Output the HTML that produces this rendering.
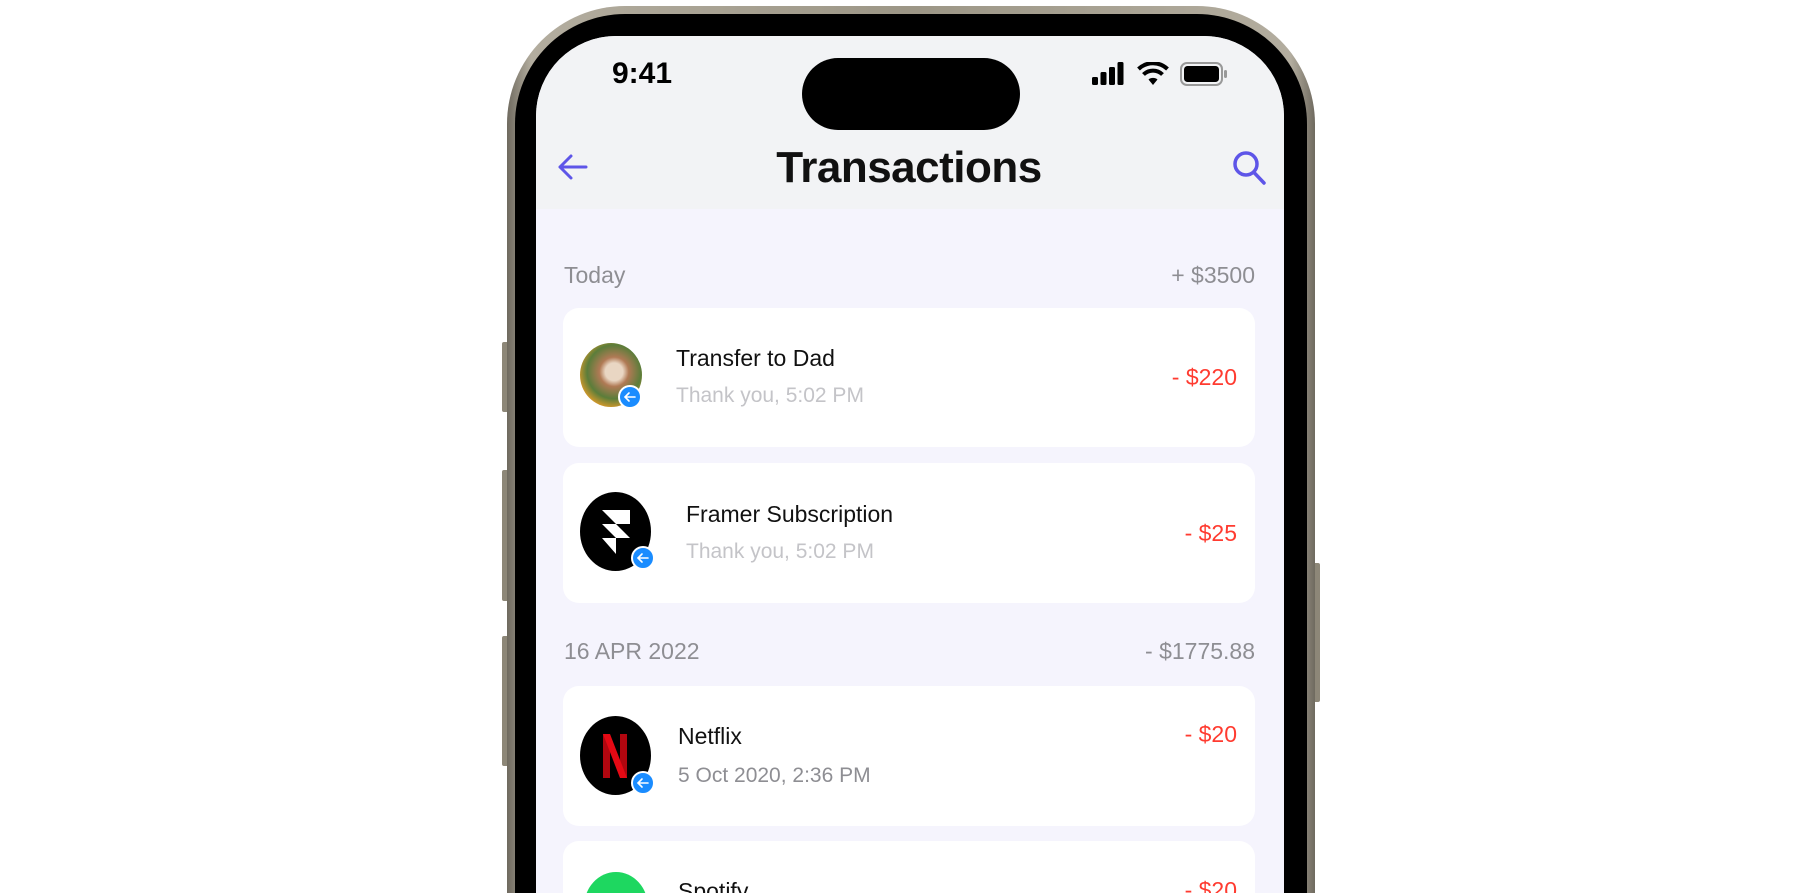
<!DOCTYPE html>
<html style="width:1820px;height:893px;overflow:hidden"><head><meta charset="utf-8"><style>
*{margin:0;padding:0;box-sizing:border-box}
html{overflow:hidden;height:893px}
body{width:1820px;height:893px;background:#fff;position:relative;overflow:hidden;font-family:"Liberation Sans",sans-serif}
.a{position:absolute}
.t{position:absolute;white-space:nowrap;line-height:1}
.card{position:absolute;left:563px;width:692px;background:#fff;border-radius:16px}
.badge{position:absolute;width:24px;height:24px;border-radius:50%;background:#1a8cff;border:2px solid #fff}
.badge svg{position:absolute;left:3px;top:3px}
.title{font-size:23px;color:#111}
.sub{font-size:21px;color:#c4c4c8}
.amt{font-size:23px;color:#ff3b30;right:583px}
.hdr{font-size:23px;color:#8e8e93}
</style></head><body>
<div class="a" style="left:502px;top:342px;width:7px;height:70px;background:#8d8778;border-radius:2px"></div>
<div class="a" style="left:502px;top:470px;width:7px;height:131px;background:#8d8778;border-radius:2px"></div>
<div class="a" style="left:502px;top:636px;width:7px;height:130px;background:#8d8778;border-radius:2px"></div>
<div class="a" style="left:1313px;top:563px;width:7px;height:139px;background:#8d8778;border-radius:2px"></div>
<div class="a" style="left:507px;top:6px;width:808px;height:887px;border-radius:118px 118px 0 0;background:linear-gradient(90deg,#6f6a5f,#b3ad9f 3%,#9c9686 50%,#b3ad9f 97%,#6f6a5f)"></div>
<div class="a" style="left:515px;top:14px;width:792px;height:879px;border-radius:110px 110px 0 0;background:#000"></div>
<div class="a" style="left:536px;top:36px;width:748px;height:857px;border-radius:80px 80px 0 0;background:#f5f4fd;overflow:hidden">
  <div class="a" style="left:0;top:0;width:748px;height:173px;background:#f2f3f5"></div>
</div>
<div class="t" style="left:612px;top:59px;font-size:30px;font-weight:bold;color:#000">9:41</div>
<div class="a" style="left:802px;top:58px;width:218px;height:72px;border-radius:36px;background:#000"></div>
<svg class="a" style="left:1092px;top:62px" width="32" height="24" viewBox="0 0 32 24"><rect x="0" y="15" width="6" height="8" rx="1.5"/><rect x="8.5" y="10" width="6" height="13" rx="1.5"/><rect x="17" y="5" width="6" height="18" rx="1.5"/><rect x="25.5" y="0" width="6" height="23" rx="1.5"/></svg>
<svg class="a" style="left:1137px;top:62px" width="32" height="24" viewBox="0 0 32 24"><path d="M16 23 L11.5 17.5 A7 7 0 0 1 20.5 17.5 Z"/><path d="M6.5 12.5 A13.5 13.5 0 0 1 25.5 12.5" fill="none" stroke="#000" stroke-width="4"/><path d="M1.5 7 A21 21 0 0 1 30.5 7" fill="none" stroke="#000" stroke-width="4"/></svg>
<svg class="a" style="left:1180px;top:62px" width="48" height="24" viewBox="0 0 48 24"><rect x="1" y="1" width="41" height="22" rx="6" fill="none" stroke="#999" stroke-width="2"/><rect x="4" y="4" width="35" height="16" rx="3.5" fill="#000"/><rect x="44" y="8" width="3" height="8" rx="1.5" fill="#999"/></svg>
<svg class="a" style="left:557px;top:153px" width="32" height="28" viewBox="0 0 32 28" fill="none" stroke="#5e55e8" stroke-width="3" stroke-linecap="round" stroke-linejoin="round"><path d="M29 14H3M14 3L3 14l11 11"/></svg>
<div class="t" style="left:709px;width:400px;text-align:center;top:146px;font-size:44px;font-weight:bold;color:#111;letter-spacing:-0.5px">Transactions</div>
<svg class="a" style="left:1232px;top:150px" width="36" height="36" viewBox="0 0 36 36" fill="none" stroke="#5e55e8" stroke-width="3.5" stroke-linecap="round"><circle cx="14" cy="14" r="11"/><path d="M22.5 23 L32 33"/></svg>
<div class="t hdr" style="left:564px;top:264px">Today</div>
<div class="t hdr" style="right:565px;top:264px">+ $3500</div>
<div class="card" style="top:308px;height:139px"></div>
<div class="a" style="left:580px;top:343px;width:62px;height:64px;border-radius:50%;background:radial-gradient(circle at 55% 45%,#e9d6c3 0 18%,#b07a55 30%,#5b7d3a 55%,#d99a2a 75%,#3c5e8a 100%)"></div>
<div class="badge" style="left:618px;top:385px"><svg width="14" height="14" viewBox="0 0 14 14" fill="none" stroke="#fff" stroke-width="1.6" stroke-linecap="round"><path d="M12 7H2M6 3L2 7l4 4"/></svg></div>
<div class="t title" style="left:676px;top:347px">Transfer to Dad</div>
<div class="t sub" style="left:676px;top:385px">Thank you, 5:02 PM</div>
<div class="t amt" style="top:366px">- $220</div>
<div class="card" style="top:463px;height:140px"></div>
<div class="a" style="left:580px;top:492px;width:71px;height:79px;border-radius:50%;background:#000"></div>
<svg class="a" style="left:600px;top:508px" width="32" height="48" viewBox="0 0 32 48" fill="#fff"><path d="M2 2H30V16H16Z"/><path d="M2 16H16L30 30H16Z"/><path d="M2 30H16V46Z"/></svg>
<div class="badge" style="left:631px;top:546px"><svg width="14" height="14" viewBox="0 0 14 14" fill="none" stroke="#fff" stroke-width="1.6" stroke-linecap="round"><path d="M12 7H2M6 3L2 7l4 4"/></svg></div>
<div class="t title" style="left:686px;top:503px">Framer Subscription</div>
<div class="t sub" style="left:686px;top:541px">Thank you, 5:02 PM</div>
<div class="t amt" style="top:522px">- $25</div>
<div class="t hdr" style="left:564px;top:640px">16 APR 2022</div>
<div class="t hdr" style="right:565px;top:640px">- $1775.88</div>
<div class="card" style="top:686px;height:140px"></div>
<div class="a" style="left:580px;top:716px;width:71px;height:79px;border-radius:50%;background:#000"></div>
<svg class="a" style="left:601px;top:733px" width="28" height="46" viewBox="0 0 28 46"><rect x="2" y="1" width="7" height="44" fill="#b1060f"/><rect x="19" y="1" width="7" height="44" fill="#b1060f"/><path d="M2 1H9L26 45H19Z" fill="#e50914"/></svg>
<div class="badge" style="left:631px;top:771px"><svg width="14" height="14" viewBox="0 0 14 14" fill="none" stroke="#fff" stroke-width="1.6" stroke-linecap="round"><path d="M12 7H2M6 3L2 7l4 4"/></svg></div>
<div class="t title" style="left:678px;top:725px">Netflix</div>
<div class="t sub" style="left:678px;top:765px;color:#8e8e93">5 Oct 2020, 2:36 PM</div>
<div class="t amt" style="top:723px">- $20</div>
<div class="card" style="top:841px;height:52px;border-radius:16px 16px 0 0"></div>
<div class="a" style="left:584px;top:872px;width:64px;height:21px;overflow:hidden"><div style="width:64px;height:70px;border-radius:50%;background:#1ed760"></div></div>
<div class="a" style="left:670px;top:870px;width:100px;height:23px;overflow:hidden"><div class="t title" style="left:8px;top:10px">Spotify</div></div>
<div class="a" style="left:1170px;top:870px;width:67px;height:23px;overflow:hidden"><div class="t amt" style="right:0;top:9px">- $20</div></div>
</body></html>
